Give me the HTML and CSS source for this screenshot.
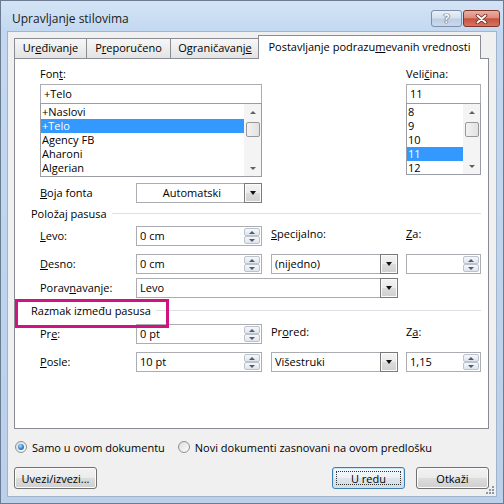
FILE: index.html
```html
<!DOCTYPE html>
<html lang="sr">
<head>
    <meta charset="UTF-8">
    <title>Upravljanje stilovima</title>
    <link rel="stylesheet" href="styles.css">
</head>
<body>
    <div class="window">
        <div class="titlebar">
            <span class="title">Upravljanje stilovima</span>
            <div class="caption">
                <span class="cap help">?</span>
                <span class="cap close">
                    <svg width="13" height="10" viewBox="0 0 13 10">
                        <path d="M2.5 1.5 L10.5 8.5 M10.5 1.5 L2.5 8.5" stroke="#6b2218" stroke-width="3.6" stroke-linecap="round"/>
                        <path d="M2.5 1.5 L10.5 8.5 M10.5 1.5 L2.5 8.5" stroke="#fff" stroke-width="2" stroke-linecap="round"/>
                    </svg>
                </span>
            </div>
        </div>

        <div class="client">
            <div class="tabs">
                <div class="tab t1">Ur<u>e</u>đivanje</div>
                <div class="tab t2">P<u>r</u>eporučeno</div>
                <div class="tab t3">Ograničavanj<u>e</u></div>
                <div class="tab active">Postavljanje podrazu<u>m</u>evanih vrednosti</div>
            </div>

            <div class="panel">
                <div class="font-row">
                    <div class="font-col">
                        <div class="label">Fon<u>t</u>:</div>
                        <div class="textbox">+Telo</div>
                        <div class="listbox">
                            <ul class="items">
                                <li>+Naslovi</li>
                                <li class="sel">+Telo</li>
                                <li>Agency FB</li>
                                <li>Aharoni</li>
                                <li>Algerian</li>
                            </ul>
                            <div class="vscroll"><i class="arr up"></i><i class="thumb"></i><i class="arr dn"></i></div>
                        </div>
                    </div>
                    <div class="size-col">
                        <div class="label">Veli<u>č</u>ina:</div>
                        <div class="textbox">11</div>
                        <div class="listbox small">
                            <ul class="items">
                                <li>8</li>
                                <li>9</li>
                                <li>10</li>
                                <li class="sel">11</li>
                                <li>12</li>
                            </ul>
                            <div class="vscroll"><i class="arr up"></i><i class="thumb"></i><i class="arr dn"></i></div>
                        </div>
                    </div>
                </div>

                <div class="color-row">
                    <span class="row-label"><u>B</u>oja fonta</span>
                    <div class="combo center w126"><span class="val">Automatski</span><span class="ddbtn"></span></div>
                </div>

                <div class="group"><span>Položaj pasusa</span></div>
                <div class="grid pos-grid">
                    <span class="row-label"><u>L</u>evo:</span>
                    <div class="spinbox w126"><span class="val">0 cm</span><span class="spin"><i class="up"></i><i class="dn"></i></span></div>
                    <span class="col-label"><u>S</u>pecijalno:</span>
                    <span class="col-label"><u>Z</u>a:</span>

                    <span class="row-label"><u>D</u>esno:</span>
                    <div class="spinbox w126"><span class="val">0 cm</span><span class="spin"><i class="up"></i><i class="dn"></i></span></div>
                    <div class="combo w127"><span class="val">(nijedno)</span><span class="ddbtn"></span></div>
                    <div class="spinbox w75"><span class="val"></span><span class="spin"><i class="up"></i><i class="dn"></i></span></div>

                    <span class="row-label">Porav<u>n</u>avanje:</span>
                    <div class="combo wide"><span class="val">Levo</span><span class="ddbtn"></span></div>
                </div>

                <div class="group marked"><span>Razmak između pasusa</span></div>
                <div class="grid space-grid">
                    <span class="row-label">Pr<u>e</u>:</span>
                    <div class="spinbox w126"><span class="val">0 pt</span><span class="spin"><i class="up"></i><i class="dn"></i></span></div>
                    <span class="col-label">Pr<u>o</u>red:</span>
                    <span class="col-label">Z<u>a</u>:</span>

                    <span class="row-label"><u>P</u>osle:</span>
                    <div class="spinbox w126"><span class="val">10 pt</span><span class="spin"><i class="up"></i><i class="dn"></i></span></div>
                    <div class="combo w127"><span class="val">Višestruki</span><span class="ddbtn"></span></div>
                    <div class="spinbox w75"><span class="val">1,15</span><span class="spin"><i class="up"></i><i class="dn"></i></span></div>
                </div>
            </div>

            <div class="scope">
                <span class="radio on"></span>
                <span class="radio-text">Samo u ovom dokumentu</span>
                <span class="radio"></span>
                <span class="radio-text">Novi dokumenti zasnovani na ovom predlošku</span>
            </div>

            <div class="actions">
                <button class="btn import">Uvezi/izvezi...</button>
                <button class="btn ok">U redu</button>
                <button class="btn cancel">Otkaži</button>
            </div>

            <svg class="grip" width="11" height="11" viewBox="0 0 11 11">
                <g fill="#8a98a8">
                    <rect x="8" y="2" width="2" height="2"/>
                    <rect x="5" y="5" width="2" height="2"/>
                    <rect x="8" y="5" width="2" height="2"/>
                    <rect x="2" y="8" width="2" height="2"/>
                    <rect x="5" y="8" width="2" height="2"/>
                    <rect x="8" y="8" width="2" height="2"/>
                </g>
            </svg>
        </div>
    </div>
</body>
</html>
```

FILE: styles.css
```css
* {
    margin: 0;
    padding: 0;
    box-sizing: border-box;
}

body {
    width: 504px;
    height: 504px;
    overflow: hidden;
    font-family: "Open Sans", "Noto Sans", sans-serif;
    font-size: 11px;
    color: #000;
}

u {
    text-decoration: underline;
    text-underline-offset: 1px;
}

.window {
    width: 504px;
    height: 504px;
    display: flex;
    flex-direction: column;
    padding: 0 6px 6px;
    border: 1px solid #6b7c92;
    background: linear-gradient(to bottom, #d4e4f6 0, #c3d8f0 30px, #bad0eb 100%);
}

/* Title bar */
.titlebar {
    height: 30px;
    display: flex;
    align-items: flex-start;
}

.title {
    margin: 10px 0 0 5px;
    font-size: 12px;
    line-height: 16px;
    color: #1b1b1b;
}

.caption {
    display: flex;
    gap: 1px;
    margin: 9px -3px 0 auto;
}

.cap {
    height: 17px;
    display: flex;
    align-items: center;
    justify-content: center;
    border: 1px solid;
    border-radius: 3px;
}

.help {
    width: 31px;
    border-color: #7d8ea6;
    background: linear-gradient(to bottom, #e9f0f9 0, #d4e0f0 48%, #bccde4 52%, #cad9ed 100%);
    color: #fff;
    font-weight: bold;
    font-size: 12px;
    text-shadow: 0 0 1px #43536b, 0 0 1px #43536b, 0 0 1px #43536b;
}

.close {
    width: 37px;
    border-color: #80352b;
    background: linear-gradient(to bottom, #eab0a3 0, #dc8c7c 45%, #c7513f 52%, #d57561 100%);
}

/* Client area */
.client {
    flex: 1;
    position: relative;
    padding: 3px 7px 0 6px;
    background: #f0f0f0;
    border: 1px solid #a2b4ca;
}

.tabs {
    display: flex;
    align-items: flex-end;
    height: 23px;
}

.tab {
    height: 20px;
    line-height: 18px;
    text-align: center;
    border: 1px solid #898c95;
    border-bottom: none;
    background: linear-gradient(to bottom, #f7f7f7, #e3e3e3);
}

.t1 { width: 73px; }
.t2 { width: 85px; margin-left: -1px; }
.t3 { width: 90px; margin-left: -1px; }

.tab.active {
    width: 223px;
    height: 24px;
    margin-left: -2px;
    margin-bottom: -1px;
    padding-top: 2px;
    position: relative;
    z-index: 1;
    background: #fff;
}

.panel {
    width: 475px;
    height: 371px;
    padding: 7px 7px 0 16px;
    background: #fff;
    border: 1px solid #898c95;
}

/* Font section */
.font-row {
    display: flex;
    justify-content: space-between;
    margin-left: 9px;
}

.font-col { width: 222px; }
.size-col { width: 75px; }

.label {
    height: 15px;
    line-height: 15px;
    margin-bottom: 3px;
}

.textbox {
    height: 20px;
    line-height: 18px;
    padding-left: 3px;
    background: #fff;
    border: 1px solid #abadb3;
}

.listbox {
    display: flex;
    height: 74px;
    margin-top: -1px;
    background: #fff;
    border: 1px solid #9a9da4;
}

.listbox.small { height: 72px; }

.items {
    flex: 1;
    list-style: none;
    padding-top: 1px;
}

.items li {
    height: 14px;
    line-height: 14px;
    padding-left: 1px;
}

.items li.sel {
    background: #3399ff;
    color: #fff;
}

.vscroll {
    width: 17px;
    display: flex;
    flex-direction: column;
    align-items: center;
    background: #f4f4f4;
}

.arr {
    width: 17px;
    height: 16px;
    display: flex;
    align-items: center;
    justify-content: center;
}

.arr::before {
    content: "";
    border-left: 3px solid transparent;
    border-right: 3px solid transparent;
}

.arr.up::before { border-bottom: 3px solid #606060; }
.arr.dn::before { border-top: 3px solid #606060; }

.arr.dn { margin-top: auto; }

.thumb {
    width: 14px;
    height: 15px;
    margin-top: 2px;
    border: 1px solid #989898;
    border-radius: 2px;
    background: linear-gradient(to right, #f2f2f2, #e2e2e2);
}

/* Rows with labels */
.color-row {
    display: flex;
    align-items: center;
    margin: 6px 0 0 9px;
}

.row-label {
    width: 96px;
    line-height: 20px;
}

.combo,
.spinbox {
    height: 20px;
    display: flex;
    background: #fff;
    border: 1px solid #abadb3;
}

.combo .val,
.spinbox .val {
    flex: 1;
    line-height: 18px;
    padding-left: 3px;
}

.combo.center .val {
    text-align: center;
}

.w126 { width: 126px; }
.w127 { width: 127px; }
.w75 { width: 75px; }

.ddbtn {
    width: 18px;
    margin: -1px -1px -1px 0;
    display: flex;
    align-items: center;
    justify-content: center;
    border: 1px solid #7a7a7a;
    background: linear-gradient(to bottom, #f3f3f3 0, #ebebeb 50%, #dcdcdc 51%, #d0d0d0 100%);
    box-shadow: inset 0 0 0 1px #fbfbfb;
}

.ddbtn::before {
    content: "";
    border-left: 3px solid transparent;
    border-right: 3px solid transparent;
    border-top: 4px solid #111;
}

.spin {
    width: 17px;
    display: flex;
    flex-direction: column;
    padding: 1px 1px 1px 0;
}

.spin i {
    flex: 1;
    display: flex;
    align-items: center;
    justify-content: center;
    border: 1px solid #bcc3cc;
    border-radius: 2px;
    background: linear-gradient(to bottom, #f6f8fa, #dfe5ec);
}

.spin i::before {
    content: "";
    border-left: 3px solid transparent;
    border-right: 3px solid transparent;
}

.spin .up::before { border-bottom: 3px solid #4f5c70; }
.spin .dn::before { border-top: 3px solid #4f5c70; }

/* Group headers */
.group {
    display: flex;
    align-items: center;
    line-height: 15px;
    margin-top: 3px;
}

.group::after {
    content: "";
    flex: 1;
    margin-left: 5px;
    border-top: 1px solid #dde1e5;
}

.group.marked {
    margin-top: 5px;
}

.group.marked span {
    position: relative;
}

.group.marked span::before {
    content: "";
    position: absolute;
    left: -16px;
    top: -4px;
    width: 148px;
    height: 23px;
    border: 3px solid #d0137e;
    z-index: 1;
}

.grid {
    display: grid;
    grid-template-columns: 96px 135px 135px 75px;
    align-items: start;
    margin-left: 9px;
}

.pos-grid {
    margin-top: 5px;
    grid-template-rows: 28px 24px 20px;
}

.space-grid {
    margin-top: 6px;
    grid-template-rows: 28px 20px;
}

.col-label {
    line-height: 15px;
}

.combo.wide {
    grid-column: 2 / 4;
    width: 262px;
}

/* Scope radios */
.scope {
    display: flex;
    align-items: center;
    height: 16px;
    margin-top: 10px;
    padding-left: 1px;
}

.radio {
    width: 12px;
    height: 12px;
    position: relative;
    border-radius: 50%;
    border: 1px solid #8e8f8f;
    background: linear-gradient(135deg, #dcdcdc, #fdfdfd);
}

.radio.on::after {
    content: "";
    position: absolute;
    left: 2px;
    top: 2px;
    width: 6px;
    height: 6px;
    border-radius: 50%;
    background: radial-gradient(circle at 40% 35%, #b4e2ff 0, #3d8fd8 45%, #16508f 100%);
}

.radio-text {
    margin: 0 13px 0 5px;
}

/* Buttons */
.actions {
    display: flex;
    margin-top: 12px;
}

.btn {
    height: 22px;
    font: inherit;
    color: #000;
    text-align: center;
    border: 1px solid #707070;
    border-radius: 3px;
    background: linear-gradient(to bottom, #f2f2f2 0, #ebebeb 49%, #dddddd 50%, #cfcfcf 100%);
    box-shadow: inset 0 0 0 1px #fcfcfc;
}

.import { width: 83px; }

.ok {
    width: 73px;
    margin-left: auto;
    position: relative;
    border-color: #3c7fb1;
    box-shadow: inset 0 0 0 1px #c6e6f8;
    background: linear-gradient(to bottom, #f4f8fb 0, #ecf1f5 49%, #dfe6ec 50%, #d3dde6 100%);
}

.ok::after {
    content: "";
    position: absolute;
    left: 3px;
    right: 3px;
    top: 3px;
    bottom: 3px;
    border: 1px dotted #333;
}

.cancel {
    width: 73px;
    margin-left: 11px;
}

.grip {
    position: absolute;
    right: 1px;
    bottom: 1px;
}
```
